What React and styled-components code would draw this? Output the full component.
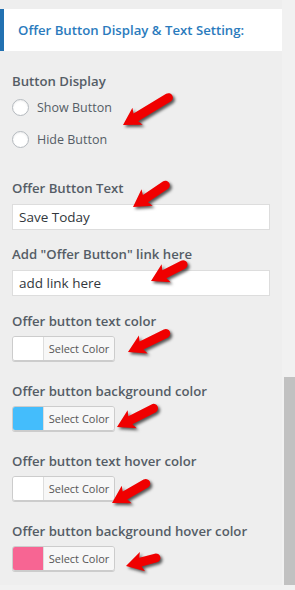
import React from "react";
import styled, { createGlobalStyle } from "styled-components";

const GlobalStyle = createGlobalStyle`
  html, body {
    margin: 0;
    padding: 0;
    background: #f1f1f1;
  }
  body {
    font-family: "Open Sans", "Noto Sans", sans-serif;
  }
`;

const Page = styled.div`
  display: flex;
  width: 295px;
  height: 590px;
  overflow: hidden;
`;

const Panel = styled.div`
  position: relative;
  width: 282px;
  height: 585px;
  background: #eeeeee;
  padding-top: 9px;
  box-sizing: border-box;
`;

const Scrollbar = styled.div`
  flex: 1;
  padding-top: 377px;
  padding-left: 2px;
`;

const Thumb = styled.div`
  height: 208px;
  background: #c1c1c1;
`;

const Header = styled.div`
  height: 42px;
  display: flex;
  align-items: center;
  background: #fff;
  border-left: 4px solid #2271b1;
  padding-left: 14px;
`;

const Title = styled.h3`
  margin: 0;
  font-size: 13.2px;
  font-weight: 600;
  color: #2b7bbd;
`;

const Body = styled.div`
  padding: 20px 12px 0;
`;

const Field = styled.div`
  margin-bottom: ${({ gap }) => gap}px;
`;

const Label = styled.div`
  font-size: 13.2px;
  line-height: 20px;
  font-weight: 600;
  color: #555d66;
  margin-bottom: ${({ space }) => space || 0}px;
`;

const RadioRow = styled.label`
  display: flex;
  align-items: center;
  height: 32px;
  font-size: 12.5px;
  color: #555d66;
`;

const Radio = styled.span`
  width: 15px;
  height: 15px;
  border-radius: 50%;
  border: 1px solid #b4b9be;
  background: #fff;
  box-shadow: inset 0 1px 2px rgba(0, 0, 0, 0.07);
  margin-right: 8px;
`;

const TextInput = styled.div`
  width: 258px;
  height: 26px;
  box-sizing: border-box;
  border: 1px solid #dddddd;
  background: #fff;
  padding-left: 6px;
  display: flex;
  align-items: center;
  font-size: 13.5px;
  color: #32373c;
`;

const ColorButton = styled.div`
  display: flex;
  width: 103px;
  height: 25px;
  box-sizing: border-box;
  border: 1px solid #cccccc;
  border-radius: 3px;
  box-shadow: 0 1px 0 #cccccc;
  overflow: hidden;
`;

const Swatch = styled.span`
  width: 30px;
  background: ${({ color }) => color};
`;

const SwatchText = styled.span`
  flex: 1;
  display: flex;
  align-items: center;
  justify-content: center;
  background: #f7f7f7;
  border-left: 1px solid #dddddd;
  font-size: 11px;
  color: #555555;
`;

const ArrowSvg = styled.svg`
  position: absolute;
  overflow: visible;
  width: 1px;
  height: 1px;
  filter: drop-shadow(2px 2px 1.5px rgba(0, 0, 0, 0.65));
`;

function Arrow({ x, y, length, angle }) {
  const L = length;
  return (
    <ArrowSvg style={{ left: x, top: y }}>
      <g transform={`rotate(${angle})`}>
        <path
          d={`M0 0 L17 -10 L15 -4.5 L${L} -4.5 A4.5 4.5 0 0 1 ${L} 4.5 L15 4.5 L17 10 Z`}
          fill="#f00000"
        />
      </g>
    </ArrowSvg>
  );
}

const colors = [
  { label: "Offer button text color", color: "#ffffff" },
  { label: "Offer button background color", color: "#44bdfc" },
  { label: "Offer button text hover color", color: "#ffffff" },
  { label: "Offer button background hover color", color: "#f76593" },
];

const arrows = [
  { x: 123, y: 125, length: 53, angle: -31 },
  { x: 133, y: 207, length: 39, angle: -34 },
  { x: 151, y: 281, length: 36, angle: -27 },
  { x: 128, y: 352, length: 42, angle: -26 },
  { x: 117, y: 427, length: 41, angle: -27 },
  { x: 112, y: 503, length: 39, angle: -30 },
  { x: 126, y: 566, length: 31, angle: -15 },
];

export default function App() {
  return (
    <Page>
      <GlobalStyle />
      <Panel>
        <Header>
          <Title>Offer Button Display &amp; Text Setting:</Title>
        </Header>
        <Body>
          <Field gap={23}>
            <Label>Button Display</Label>
            <RadioRow>
              <Radio />
              Show Button
            </RadioRow>
            <RadioRow>
              <Radio />
              Hide Button
            </RadioRow>
          </Field>
          <Field gap={14}>
            <Label space={6}>Offer Button Text</Label>
            <TextInput>Save Today</TextInput>
          </Field>
          <Field gap={15}>
            <Label space={6}>Add "Offer Button" link here</Label>
            <TextInput>add link here</TextInput>
          </Field>
          {colors.map((c) => (
            <Field gap={20} key={c.label}>
              <Label space={5}>{c.label}</Label>
              <ColorButton>
                <Swatch color={c.color} />
                <SwatchText>Select Color</SwatchText>
              </ColorButton>
            </Field>
          ))}
        </Body>
        {arrows.map((a, i) => (
          <Arrow key={i} {...a} />
        ))}
      </Panel>
      <Scrollbar>
        <Thumb />
      </Scrollbar>
    </Page>
  );
}
